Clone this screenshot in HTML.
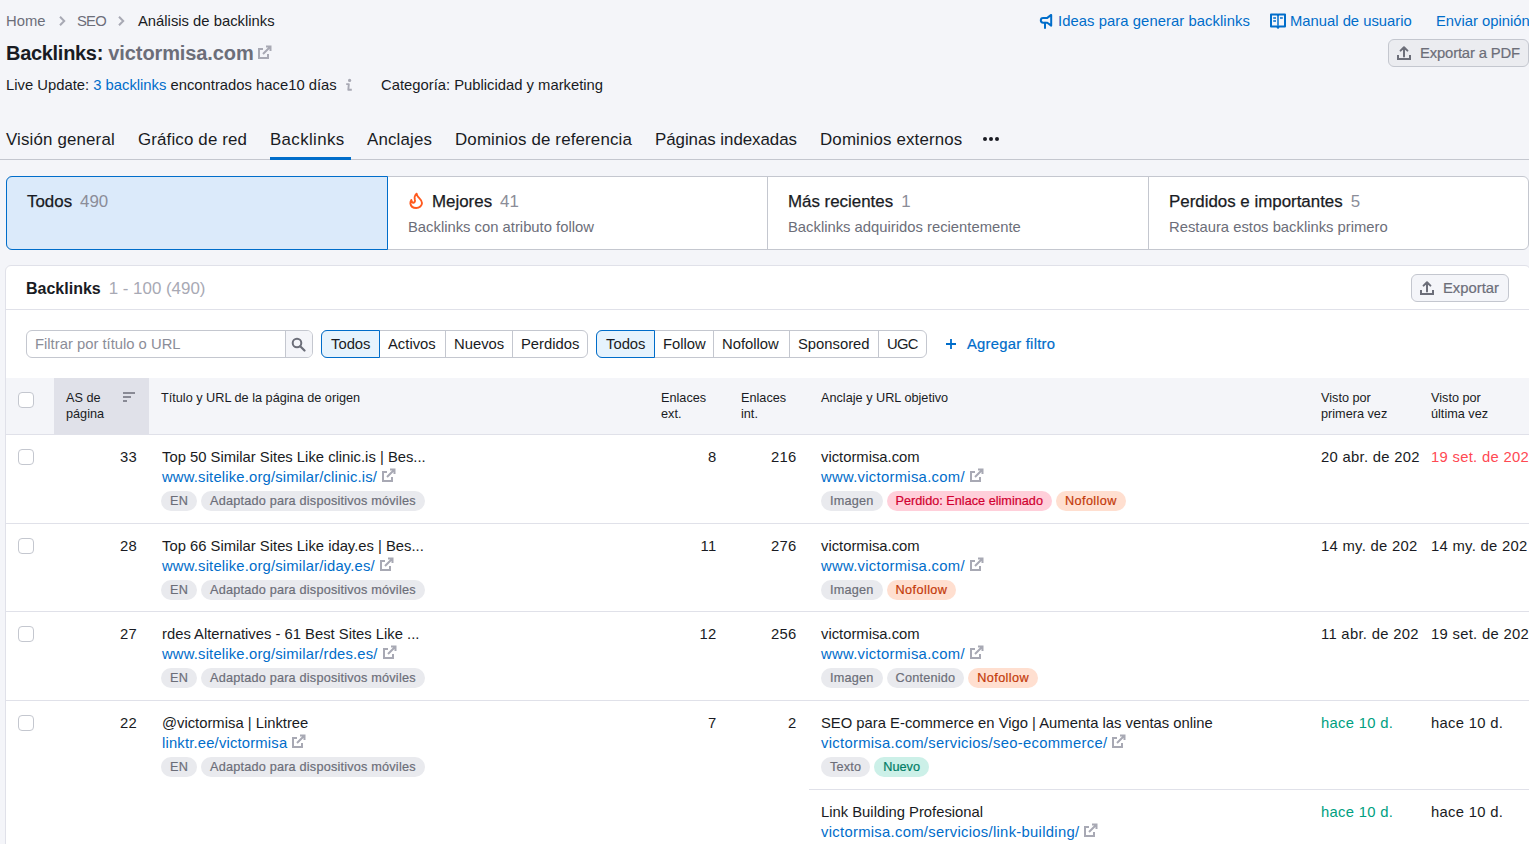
<!DOCTYPE html>
<html><head><meta charset="utf-8">
<style>
*{box-sizing:border-box;margin:0;padding:0}
html,body{width:1529px;height:844px;overflow:hidden}
body{background:#f4f5f9;font-family:"Liberation Sans",sans-serif;color:#191b23;position:relative}
.a{position:absolute;white-space:nowrap}
.t14{font-size:14.8px;line-height:18px}
.gray{color:#6c6e79}
.blue{color:#006dca}
.ic{position:absolute}
.med{-webkit-text-stroke:0.25px currentColor}
.cnt{color:#8b8d98;margin-left:8px;-webkit-text-stroke:0}
.cb{position:absolute;width:16px;height:16px;border:1px solid #c4c7cf;border-radius:4px;background:#fff}
.th{font-size:12.7px;line-height:16px;margin-top:1px}
.num{letter-spacing:0.3px}
.url{letter-spacing:0.18px}
.aurl{letter-spacing:0.3px}
.ext{display:inline-block;vertical-align:top;margin-left:5px;margin-top:0}
.date{overflow:hidden}
.red{color:#ff4953}.green{color:#009f81}
.tags{display:flex;gap:4px;height:20px}
.tag{display:inline-block;height:20px;line-height:20px;padding:0 9px 0 9px;border-radius:10px;font-size:12.7px;-webkit-text-stroke:0.2px currentColor;background:#e9eaee;color:#6c6e79}
.tag.g{letter-spacing:0.2px}
.tag.en{letter-spacing:-0.6px;padding:0 9px 0 8.5px}
.tag.ad{letter-spacing:0.12px;padding:0 8.5px 0 10px}
.tag.r{background:#ffcfda;color:#d1002f}
.tag.o{background:#ffdfd0;color:#c33909;letter-spacing:0.4px}
.tag.gr{background:#ccf0e8;color:#007c65}


</style></head><body>

<!-- breadcrumb -->
<div class="a t14" style="left:6px;top:12px">
<span class="gray">Home</span>
</div>
<svg class="ic" style="left:57px;top:15px" width="10" height="12" viewBox="0 0 10 12"><path d="M3 1.8l4.2 4.2-4.2 4.2" fill="none" stroke="#a8a9b4" stroke-width="2"/></svg>
<div class="a t14 gray" style="left:77px;top:12px;letter-spacing:-0.8px">SEO</div>
<svg class="ic" style="left:116px;top:15px" width="10" height="12" viewBox="0 0 10 12"><path d="M3 1.8l4.2 4.2-4.2 4.2" fill="none" stroke="#a8a9b4" stroke-width="2"/></svg>
<div class="a t14" style="left:138px;top:12px">Análisis de backlinks</div>

<!-- right links -->
<svg class="ic" style="left:1036px;top:10px" width="20" height="22" viewBox="0 0 20 22"><path d="M11.3 7.9H7.2A2.4 2.4 0 0 0 7.2 12.7H11.3L15.2 15.6V4.9L11.3 7.9Z" fill="none" stroke="#006dca" stroke-width="2" stroke-linejoin="round"/><path d="M9 12.7V18.1" stroke="#006dca" stroke-width="2" stroke-linecap="round"/></svg>
<div class="a t14 blue" style="left:1058px;top:12px;letter-spacing:0.07px">Ideas para generar backlinks</div>
<svg class="ic" style="left:1270px;top:13px" width="16" height="16" viewBox="0 0 16 16"><path d="M1 1.5h6.5l.5.7.5-.7H15v12H9l-1 1.3-1-1.3H1z" fill="none" stroke="#006dca" stroke-width="2" stroke-linejoin="round"/><path d="M8 2v12" stroke="#006dca" stroke-width="1.5"/><path d="M3.2 5h2.8M3.2 8h2.8M10 5h2.8" stroke="#006dca" stroke-width="1.7"/></svg>
<div class="a t14 blue" style="left:1290px;top:12px">Manual de usuario</div>
<div class="a t14 blue" style="left:1436px;top:12px">Enviar opinión</div>

<!-- export pdf -->
<div class="a" style="left:1388px;top:39px;width:141px;height:28px;border:1px solid #c4c7cf;border-radius:6px;background:#ebecf0"></div>
<svg class="ic" style="left:1397px;top:46px" width="14" height="14" viewBox="0 0 14 14"><path d="M7 10.5V1.8M3.6 4.6L7 1.2l3.4 3.4" fill="none" stroke="#6c6e79" stroke-width="2" stroke-linecap="round" stroke-linejoin="round"/><path d="M1 9v4h12V9" fill="none" stroke="#6c6e79" stroke-width="2"/></svg>
<div class="a t14 gray" style="left:1420px;top:44px;letter-spacing:-0.15px;-webkit-text-stroke:0.2px #6c6e79">Exportar a PDF</div>

<!-- title -->
<div class="a" style="left:6px;top:41px;font-size:20px;line-height:24px;font-weight:bold;letter-spacing:-0.3px">Backlinks: <span class="gray" style="letter-spacing:-0.1px">victormisa.com</span></div>
<svg class="ic" style="left:258px;top:45px" width="14" height="14" viewBox="0 0 14 14"><path d="M5 4H1v9h9V9" fill="none" stroke="#a8a9b4" stroke-width="2"/><path d="M5 9L12.5 1.5M8 1.5h4.5V6" fill="none" stroke="#a8a9b4" stroke-width="2"/></svg>

<!-- live update -->
<div class="a t14" style="left:6px;top:76px">Live Update: <span class="blue">3 backlinks</span> encontrados hace10 días</div>
<svg class="ic" style="left:344px;top:77px" width="10" height="16" viewBox="0 0 10 16"><circle cx="5.6" cy="3.4" r="1.6" fill="#a8a9b4"/><path d="M2.2 7.1H4.8L4.3 12.8H7.8" fill="none" stroke="#a8a9b4" stroke-width="1.9" stroke-linejoin="round"/></svg>
<div class="a t14" style="left:381px;top:76px">Categoría: Publicidad y marketing</div>

<!-- tabs -->
<div class="a" style="left:0;top:159px;width:1529px;height:1px;background:#c4c7cf"></div>
<div class="a" style="left:6px;top:130px;font-size:16.9px;line-height:20px;letter-spacing:0.15px">Visión general</div>
<div class="a" style="left:138px;top:130px;font-size:16.9px;line-height:20px;letter-spacing:0.15px">Gráfico de red</div>
<div class="a" style="left:270px;top:130px;font-size:16.9px;line-height:20px;letter-spacing:0.35px">Backlinks</div>
<div class="a" style="left:270px;top:157px;width:81px;height:3px;background:#006dca"></div>
<div class="a" style="left:367px;top:130px;font-size:16.9px;line-height:20px;letter-spacing:0.15px">Anclajes</div>
<div class="a" style="left:455px;top:130px;font-size:16.9px;line-height:20px;letter-spacing:0.15px">Dominios de referencia</div>
<div class="a" style="left:655px;top:130px;font-size:16.9px;line-height:20px;letter-spacing:-0.05px">Páginas indexadas</div>
<div class="a" style="left:820px;top:130px;font-size:16.9px;line-height:20px;letter-spacing:0.15px">Dominios externos</div>
<svg class="ic" style="left:982px;top:136px" width="18" height="6" viewBox="0 0 18 6"><circle cx="3" cy="3" r="2" fill="#191b23"/><circle cx="9" cy="3" r="2" fill="#191b23"/><circle cx="15" cy="3" r="2" fill="#191b23"/></svg>


<!-- cards -->
<div class="a" style="left:6px;top:176px;width:1523px;height:74px;border:1px solid #c4c7cf;border-radius:6px;background:#fff"></div>
<div class="a" style="left:6px;top:176px;width:382px;height:74px;border:1px solid #006dca;border-radius:6px 0 0 6px;background:#dbeafa"></div>
<div class="a" style="left:767px;top:177px;width:1px;height:72px;background:#c4c7cf"></div>
<div class="a" style="left:1148px;top:177px;width:1px;height:72px;background:#c4c7cf"></div>
<div class="a med" style="left:27px;top:192px;font-size:16.9px;line-height:20px">Todos<span class="cnt">490</span></div>
<svg class="ic" style="left:404px;top:188px" width="24" height="26" viewBox="0 0 24 26"><path d="M12.6 5.6C11 7.2 10.2 9 10.8 11.2C11.4 13 10.8 14.8 9.3 14.7C8.2 14.6 7.5 13.2 7.3 12C6.6 13 6.3 14.4 6.4 15.5C6.8 18.5 9.2 20 12.2 20C15.5 20 18 17.5 18 15C18 12.2 15.2 10.3 13.9 8.7C13.2 7.8 12.9 6.6 12.6 5.6Z" fill="none" stroke="#ff5a1f" stroke-width="1.9" stroke-linejoin="round"/></svg>
<div class="a med" style="left:432px;top:192px;font-size:16.9px;line-height:20px">Mejores<span class="cnt">41</span></div>
<div class="a t14 gray" style="left:408px;top:218px">Backlinks con atributo follow</div>
<div class="a med" style="left:788px;top:192px;font-size:16.9px;line-height:20px">Más recientes<span class="cnt">1</span></div>
<div class="a t14 gray" style="left:788px;top:218px">Backlinks adquiridos recientemente</div>
<div class="a med" style="left:1169px;top:192px;font-size:16.9px;line-height:20px">Perdidos e importantes<span class="cnt">5</span></div>
<div class="a t14 gray" style="left:1169px;top:218px">Restaura estos backlinks primero</div>

<!-- panel -->
<div class="a" style="left:5px;top:265px;width:1526px;height:600px;border:1px solid #e0e1e9;border-radius:6px;background:#fff"></div>
<div class="a" style="left:26px;top:279px;font-size:16px;line-height:20px;font-weight:bold">Backlinks<span style="font-weight:normal;color:#a8a9b4;margin-left:8px;font-size:16.9px">1 - 100 (490)</span></div>
<div class="a" style="left:6px;top:309px;width:1523px;height:1px;background:#e0e1e9"></div>
<!-- export btn -->
<div class="a" style="left:1411px;top:274px;width:98px;height:28px;border:1px solid #c4c7cf;border-radius:6px;background:#f4f5f9"></div>
<svg class="ic" style="left:1420px;top:281px" width="14" height="14" viewBox="0 0 14 14"><path d="M7 10.5V1.8M3.6 4.6L7 1.2l3.4 3.4" fill="none" stroke="#6c6e79" stroke-width="2" stroke-linecap="round" stroke-linejoin="round"/><path d="M1 9v4h12V9" fill="none" stroke="#6c6e79" stroke-width="2"/></svg>
<div class="a t14 gray" style="left:1443px;top:279px;-webkit-text-stroke:0.2px #6c6e79">Exportar</div>

<!-- filters -->
<div class="a" style="left:26px;top:330px;width:287px;height:28px;border:1px solid #c4c7cf;border-radius:6px;background:#fff;overflow:hidden">
  <div style="position:absolute;left:258px;top:0;width:29px;height:26px;border-left:1px solid #c4c7cf;background:#f4f5f9"></div>
</div>
<svg class="ic" style="left:291px;top:337px" width="15" height="15" viewBox="0 0 15 15"><circle cx="6" cy="6" r="4.3" fill="none" stroke="#6c6e79" stroke-width="2"/><path d="M9.2 9.2l4.3 4.3" stroke="#6c6e79" stroke-width="2.2" stroke-linecap="round"/></svg>
<div class="a t14" style="left:35px;top:335px;color:#8b8d98">Filtrar por título o URL</div>

<div class="a" style="left:321px;top:330px;width:267px;height:28px;border:1px solid #c4c7cf;border-radius:6px;background:#fff"></div>
<div class="a" style="left:321px;top:330px;width:59px;height:28px;border:1px solid #006dca;border-radius:6px 0 0 6px;background:#e6f3fd"></div>
<div class="a" style="left:445px;top:331px;width:1px;height:26px;background:#c4c7cf"></div>
<div class="a" style="left:512px;top:331px;width:1px;height:26px;background:#c4c7cf"></div>
<div class="a t14" style="left:331px;top:335px">Todos</div>
<div class="a t14" style="left:388px;top:335px">Activos</div>
<div class="a t14" style="left:454px;top:335px">Nuevos</div>
<div class="a t14" style="left:521px;top:335px">Perdidos</div>

<div class="a" style="left:596px;top:330px;width:331px;height:28px;border:1px solid #c4c7cf;border-radius:6px;background:#fff"></div>
<div class="a" style="left:596px;top:330px;width:59px;height:28px;border:1px solid #006dca;border-radius:6px 0 0 6px;background:#e6f3fd"></div>
<div class="a" style="left:713px;top:331px;width:1px;height:26px;background:#c4c7cf"></div>
<div class="a" style="left:789px;top:331px;width:1px;height:26px;background:#c4c7cf"></div>
<div class="a" style="left:878px;top:331px;width:1px;height:26px;background:#c4c7cf"></div>
<div class="a t14" style="left:606px;top:335px">Todos</div>
<div class="a t14" style="left:663px;top:335px">Follow</div>
<div class="a t14" style="left:722px;top:335px">Nofollow</div>
<div class="a t14" style="left:798px;top:335px">Sponsored</div>
<div class="a t14" style="left:887px;top:335px;letter-spacing:-0.7px">UGC</div>
<svg class="ic" style="left:945px;top:338px" width="12" height="12" viewBox="0 0 12 12"><path d="M6 1v10M1 6h10" stroke="#006dca" stroke-width="1.8"/></svg>
<div class="a t14 blue" style="left:967px;top:335px;letter-spacing:0.25px;-webkit-text-stroke:0.2px #006dca">Agregar filtro</div>

<!-- table header -->
<div class="a" style="left:6px;top:378px;width:1523px;height:57px;background:#f4f5f9;border-bottom:1px solid #e0e1e9"></div>
<div class="a" style="left:54px;top:378px;width:95px;height:56px;background:#e0e1e9"></div>
<div class="cb" style="left:18px;top:392px"></div>
<div class="a th" style="left:66px;top:389px">AS de<br>página</div>
<svg class="ic" style="left:123px;top:392px" width="13" height="10" viewBox="0 0 13 10"><path d="M0 1h12M0 5h8M0 9h4" stroke="#6c6e79" stroke-width="1.6"/></svg>
<div class="a th" style="left:161px;top:389px">Título y URL de la página de origen</div>
<div class="a th" style="left:661px;top:389px">Enlaces<br>ext.</div>
<div class="a th" style="left:741px;top:389px">Enlaces<br>int.</div>
<div class="a th" style="left:821px;top:389px">Anclaje y URL objetivo</div>
<div class="a th" style="left:1321px;top:389px">Visto por<br>primera vez</div>
<div class="a th" style="left:1431px;top:389px">Visto por<br>última vez</div>





<!--ROWS-->
<div class="cb" style="left:18px;top:449px"></div>
<div class="a t14 num" style="right:1392px;top:448px">33</div>
<div class="a t14" style="left:162px;top:448px">Top 50 Similar Sites Like clinic.is | Bes...</div>
<div class="a t14 blue url" style="left:162px;top:468px">www.sitelike.org/similar/clinic.is/<svg class="ext" width="14" height="14" viewBox="0 0 14 14"><path d="M5 4H1v9h9V9" fill="none" stroke="#a8a9b4" stroke-width="2"/><path d="M5 9L12.5 1.5M8 1.5h4.5V6" fill="none" stroke="#a8a9b4" stroke-width="2"/></svg></div>
<div class="a tags" style="left:161px;top:491px"><span class="tag g">EN</span><span class="tag g">Adaptado para dispositivos móviles</span></div>
<div class="a t14 num" style="right:812.5px;top:448px">8</div>
<div class="a t14 num" style="right:732.5px;top:448px">216</div>
<div class="a t14" style="left:821px;top:448px">victormisa.com</div>
<div class="a t14 blue url aurl" style="left:821px;top:468px">www.victormisa.com/<svg class="ext" width="14" height="14" viewBox="0 0 14 14"><path d="M5 4H1v9h9V9" fill="none" stroke="#a8a9b4" stroke-width="2"/><path d="M5 9L12.5 1.5M8 1.5h4.5V6" fill="none" stroke="#a8a9b4" stroke-width="2"/></svg></div>
<div class="a tags" style="left:821px;top:491px"><span class="tag g">Imagen</span><span class="tag r">Perdido: Enlace eliminado</span><span class="tag o">Nofollow</span></div>
<div class="a t14 num date " style="left:1321px;top:448px;width:99px">20 abr. de 202</div>
<div class="a t14 num date red" style="left:1431px;top:448px;width:98px">19 set. de 202</div>
<div class="a" style="left:6px;top:523px;width:1523px;height:1px;background:#e0e1e9"></div>
<div class="cb" style="left:18px;top:538px"></div>
<div class="a t14 num" style="right:1392px;top:537px">28</div>
<div class="a t14" style="left:162px;top:537px">Top 66 Similar Sites Like iday.es | Bes...</div>
<div class="a t14 blue url" style="left:162px;top:557px">www.sitelike.org/similar/iday.es/<svg class="ext" width="14" height="14" viewBox="0 0 14 14"><path d="M5 4H1v9h9V9" fill="none" stroke="#a8a9b4" stroke-width="2"/><path d="M5 9L12.5 1.5M8 1.5h4.5V6" fill="none" stroke="#a8a9b4" stroke-width="2"/></svg></div>
<div class="a tags" style="left:161px;top:580px"><span class="tag g">EN</span><span class="tag g">Adaptado para dispositivos móviles</span></div>
<div class="a t14 num" style="right:812.5px;top:537px">11</div>
<div class="a t14 num" style="right:732.5px;top:537px">276</div>
<div class="a t14" style="left:821px;top:537px">victormisa.com</div>
<div class="a t14 blue url aurl" style="left:821px;top:557px">www.victormisa.com/<svg class="ext" width="14" height="14" viewBox="0 0 14 14"><path d="M5 4H1v9h9V9" fill="none" stroke="#a8a9b4" stroke-width="2"/><path d="M5 9L12.5 1.5M8 1.5h4.5V6" fill="none" stroke="#a8a9b4" stroke-width="2"/></svg></div>
<div class="a tags" style="left:821px;top:580px"><span class="tag g">Imagen</span><span class="tag o">Nofollow</span></div>
<div class="a t14 num date " style="left:1321px;top:537px;width:99px">14 my. de 202</div>
<div class="a t14 num date " style="left:1431px;top:537px;width:98px">14 my. de 202</div>
<div class="a" style="left:6px;top:611px;width:1523px;height:1px;background:#e0e1e9"></div>
<div class="cb" style="left:18px;top:626px"></div>
<div class="a t14 num" style="right:1392px;top:625px">27</div>
<div class="a t14" style="left:162px;top:625px">rdes Alternatives - 61 Best Sites Like ...</div>
<div class="a t14 blue url" style="left:162px;top:645px">www.sitelike.org/similar/rdes.es/<svg class="ext" width="14" height="14" viewBox="0 0 14 14"><path d="M5 4H1v9h9V9" fill="none" stroke="#a8a9b4" stroke-width="2"/><path d="M5 9L12.5 1.5M8 1.5h4.5V6" fill="none" stroke="#a8a9b4" stroke-width="2"/></svg></div>
<div class="a tags" style="left:161px;top:668px"><span class="tag g">EN</span><span class="tag g">Adaptado para dispositivos móviles</span></div>
<div class="a t14 num" style="right:812.5px;top:625px">12</div>
<div class="a t14 num" style="right:732.5px;top:625px">256</div>
<div class="a t14" style="left:821px;top:625px">victormisa.com</div>
<div class="a t14 blue url aurl" style="left:821px;top:645px">www.victormisa.com/<svg class="ext" width="14" height="14" viewBox="0 0 14 14"><path d="M5 4H1v9h9V9" fill="none" stroke="#a8a9b4" stroke-width="2"/><path d="M5 9L12.5 1.5M8 1.5h4.5V6" fill="none" stroke="#a8a9b4" stroke-width="2"/></svg></div>
<div class="a tags" style="left:821px;top:668px"><span class="tag g">Imagen</span><span class="tag g">Contenido</span><span class="tag o">Nofollow</span></div>
<div class="a t14 num date " style="left:1321px;top:625px;width:99px">11 abr. de 202</div>
<div class="a t14 num date " style="left:1431px;top:625px;width:98px">19 set. de 202</div>
<div class="a" style="left:6px;top:700px;width:1523px;height:1px;background:#e0e1e9"></div>
<div class="cb" style="left:18px;top:715px"></div>
<div class="a t14 num" style="right:1392px;top:714px">22</div>
<div class="a t14" style="left:162px;top:714px">@victormisa | Linktree</div>
<div class="a t14 blue url" style="left:162px;top:734px">linktr.ee/victormisa<svg class="ext" width="14" height="14" viewBox="0 0 14 14"><path d="M5 4H1v9h9V9" fill="none" stroke="#a8a9b4" stroke-width="2"/><path d="M5 9L12.5 1.5M8 1.5h4.5V6" fill="none" stroke="#a8a9b4" stroke-width="2"/></svg></div>
<div class="a tags" style="left:161px;top:757px"><span class="tag g">EN</span><span class="tag g">Adaptado para dispositivos móviles</span></div>
<div class="a t14 num" style="right:812.5px;top:714px">7</div>
<div class="a t14 num" style="right:732.5px;top:714px">2</div>
<div class="a t14" style="left:821px;top:714px">SEO para E-commerce en Vigo | Aumenta las ventas online</div>
<div class="a t14 blue url aurl" style="left:821px;top:734px">victormisa.com/servicios/seo-ecommerce/<svg class="ext" width="14" height="14" viewBox="0 0 14 14"><path d="M5 4H1v9h9V9" fill="none" stroke="#a8a9b4" stroke-width="2"/><path d="M5 9L12.5 1.5M8 1.5h4.5V6" fill="none" stroke="#a8a9b4" stroke-width="2"/></svg></div>
<div class="a tags" style="left:821px;top:757px"><span class="tag g">Texto</span><span class="tag gr">Nuevo</span></div>
<div class="a t14 num date green" style="left:1321px;top:714px;width:99px">hace 10 d.</div>
<div class="a t14 num date " style="left:1431px;top:714px;width:98px">hace 10 d.</div>
<div class="a" style="left:809px;top:789px;width:720px;height:1px;background:#e0e1e9"></div>
<div class="a t14" style="left:821px;top:803px">Link Building Profesional</div>
<div class="a t14 blue url aurl" style="left:821px;top:823px">victormisa.com/servicios/link-building/<svg class="ext" width="14" height="14" viewBox="0 0 14 14"><path d="M5 4H1v9h9V9" fill="none" stroke="#a8a9b4" stroke-width="2"/><path d="M5 9L12.5 1.5M8 1.5h4.5V6" fill="none" stroke="#a8a9b4" stroke-width="2"/></svg></div>
<div class="a t14 num date green" style="left:1321px;top:803px;width:99px">hace 10 d.</div>
<div class="a t14 num date" style="left:1431px;top:803px;width:98px">hace 10 d.</div>
<!--/ROWS-->




</body></html>
